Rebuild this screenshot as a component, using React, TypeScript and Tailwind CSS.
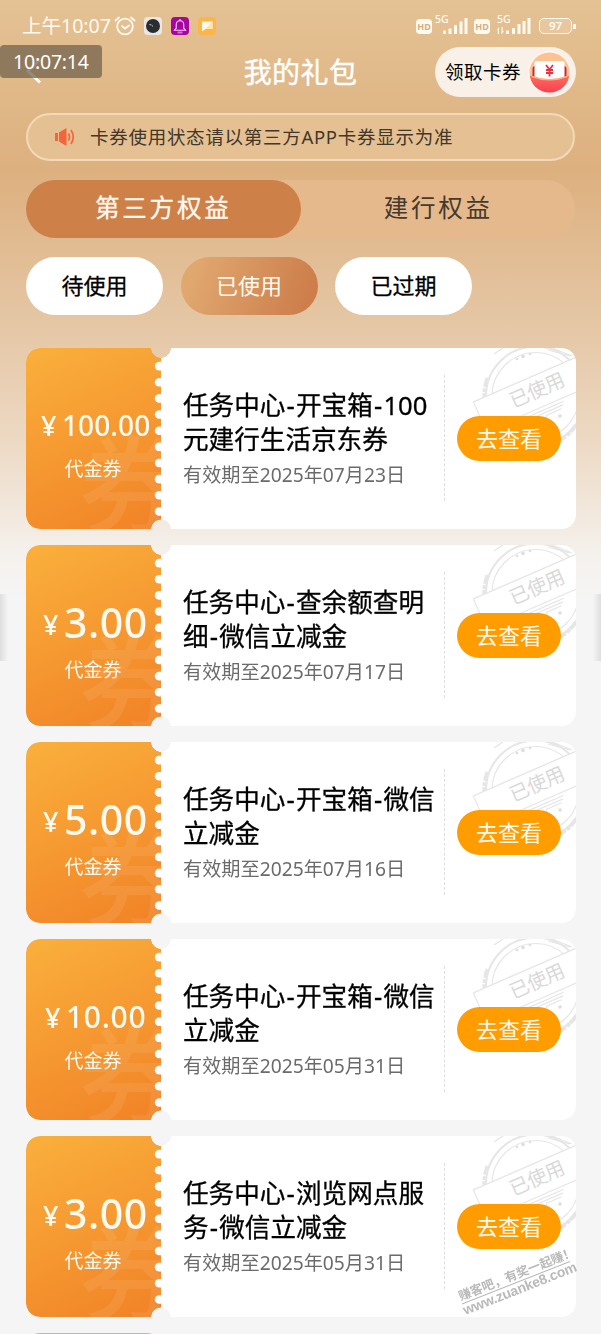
import React from 'react';

type Coupon = {
  id: number;
  amount: string;
  lines: string[];
  expires: string;
};

const COUPONS: Coupon[] = [
  { id: 1, amount: '100.00', lines: ['任务中心-开宝箱-100', '元建行生活京东券'], expires: '2025年07月23日' },
  { id: 2, amount: '3.00', lines: ['任务中心-查余额查明', '细-微信立减金'], expires: '2025年07月17日' },
  { id: 3, amount: '5.00', lines: ['任务中心-开宝箱-微信', '立减金'], expires: '2025年07月16日' },
  { id: 4, amount: '10.00', lines: ['任务中心-开宝箱-微信', '立减金'], expires: '2025年05月31日' },
  { id: 5, amount: '3.00', lines: ['任务中心-浏览网点服', '务-微信立减金'], expires: '2025年05月31日' },
];

// yen sign and number styles depend on how long the amount is
const AMOUNT_STYLES: Record<number, { row: string; yen: string; value: string; label: string }> = {
  4: {
    row: 'mt-[51px] h-[52px] pl-[17px] gap-[4px]',
    yen: 'text-[27px] pt-[4px]',
    value: 'text-[41px] tracking-[0.6px]',
    label: 'mt-[8px]',
  },
  5: {
    row: 'mt-[52px] h-[52px] pl-[19px] gap-[4px]',
    yen: 'text-[27px] pt-px',
    value: 'text-[30px] tracking-[0.7px]',
    label: 'mt-[4px]',
  },
  6: {
    row: 'mt-[51px] h-[52px] pl-[15px] gap-[4px]',
    yen: 'text-[27px]',
    value: 'text-[28px] tracking-[0.1px]',
    label: 'mt-[4px]',
  },
};

const Signal = ({ arrows = false }: { arrows?: boolean }) => (
  <svg width="34" height="26" viewBox="0 -3 34 26" fill="#fffaf0">
    <text x="0" y="7" fontSize="10.500" fontFamily="Noto Sans" fontWeight="500">
      5G
    </text>
    {!arrows && <rect x="8" y="14.500" width="3" height="3.500" rx="0.600" />}
    {arrows && <path d="M0 14l2-3v7H.8v-4zM4.500 11h1.200v4H7l-2.500 3.500z" />}
    <rect x={arrows ? 9 : 13.500} y={arrows ? 14.500 : 12.500} width="3" height={arrows ? 3.500 : 5.500} rx="0.600" />
    <rect x={arrows ? 15 : 19} y={arrows ? 12 : 9} width="3" height={arrows ? 6 : 9} rx="0.600" />
    <rect x={arrows ? 20.500 : 24.500} y={arrows ? 8 : 5.500} width="3" height={arrows ? 10 : 12.500} rx="0.600" />
    <rect x={arrows ? 25.500 : 29.500} y={arrows ? 5 : 2} width="3" height={arrows ? 13 : 16} rx="0.600" />
    {arrows && <rect x="30.500" y="2" width="3" height="16" rx="0.600" />}
  </svg>
);

const HdBadge = () => (
  <span className="flex h-[15px] w-[16px] items-center justify-center rounded-[4px] bg-[#fffaf0] text-[9px] leading-none font-bold text-[#d3b083]">
    HD
  </span>
);

const StatusBar = () => (
  <div className="flex h-[47px] items-center justify-between pt-[5px] pr-[25px] pl-[22px] text-[#fffaf0]">
    <div className="flex items-center">
      <span className="w-[92px] text-[19.500px] leading-[24px] whitespace-nowrap">上午10:07</span>
      <svg width="22" height="20" viewBox="0 0 22 20" fill="none" stroke="#fffaf0" strokeWidth="1.800" strokeLinecap="round">
        <circle cx="11" cy="10.500" r="7.800" />
        <path d="M1.500 4.500L5 1.500M20.500 4.500L17 1.500M8 10l3 2.500 4-3" />
      </svg>
      <svg className="ml-[8px]" width="18" height="18" viewBox="0 0 18 18">
        <rect width="18" height="18" rx="4" fill="#e9e8e5" />
        <circle cx="9" cy="9" r="7" fill="#2b2e31" />
        <path d="M5.500 7.500l2 .5M8 8.800l1 .4" stroke="#cfcfcf" strokeWidth="1" />
      </svg>
      <svg className="ml-[9px]" width="18" height="18" viewBox="0 0 18 18">
        <rect width="18" height="18" rx="4" fill="#a5069f" />
        <path d="M3.500 13.200h11l-1.700-2V8c0-2.500-1.500-4.200-3.800-4.200S5.200 5.500 5.200 8v3.200z" fill="none" stroke="#f4cdf2" strokeWidth="1.100" />
        <path d="M9 2v2" stroke="#f4cdf2" strokeWidth="1.200" />
        <rect x="6.500" y="14.500" width="5" height="2" fill="#e26be0" />
      </svg>
      <svg className="ml-[9px]" width="18" height="18" viewBox="0 0 18 18">
        <rect width="18" height="18" rx="4" fill="#fdb548" />
        <path d="M4 4.500h10.500v7.500H7.500L4 14.500z" fill="#fff8e8" />
        <path d="M14.500 4.500v7.500H7.500z" fill="#ffe3ab" />
      </svg>
    </div>
    <div className="flex items-center">
      <HdBadge />
      <span className="ml-[3px]">
        <Signal />
      </span>
      <span className="ml-[5px]">
        <HdBadge />
      </span>
      <span className="ml-[7px]">
        <Signal arrows />
      </span>
      <div className="ml-[8px] flex h-[16px] w-[33px] items-center justify-center rounded-[5px] border-[1.5px] border-[#fffaf0] bg-[#fffaf0]/15 text-[11.500px] leading-none font-semibold">
        97
      </div>
      <span className="ml-px h-[5px] w-[3px] bg-[#fffaf0]" />
    </div>
  </div>
);

const TitleBar = () => (
  <div className="grid h-[50px] grid-cols-3 items-center pr-[25px]">
    <div className="relative h-full">
      <svg className="ml-[25px]" width="18" height="42" viewBox="0 0 18 42" fill="none" stroke="#fff" strokeWidth="3">
        <path d="M15 12.500L3 24 15 35.500" />
      </svg>
      <div className="absolute -top-[2px] left-0 flex h-[33px] w-[102px] items-center rounded-[4px] bg-[#73634e]/75 pl-[13px] text-[19.500px] tracking-[-0.2px] text-white">
        10:07:14
      </div>
    </div>
    <h1 className="-mr-[25px] text-center text-[28px] leading-[40px] tracking-[0.4px] text-white [-webkit-text-stroke:0.4px]">
      我的礼包
    </h1>
    <div className="ml-auto flex h-[50px] w-[141px] items-center rounded-full bg-[#f9f1e7] pl-[10px] text-[18.500px] tracking-[0.5px] whitespace-nowrap text-black">
      领取卡券
      <svg className="ml-[7px] shrink-0" width="43" height="43" viewBox="0 0 43 43">
        <defs>
          <linearGradient id="bag" x1="0" y1="0" x2="0" y2="1">
            <stop offset="0" stopColor="#ff6a5e" />
            <stop offset="1" stopColor="#f53b52" />
          </linearGradient>
          <clipPath id="disc">
            <circle cx="21.500" cy="21.500" r="20" />
          </clipPath>
        </defs>
        <circle cx="21.500" cy="21.500" r="21.500" fill="#fff6ee" />
        <g clipPath="url(#disc)">
          <rect width="43" height="43" fill="#fcc294" />
          <rect x="4.500" y="15" width="34" height="14" rx="3" fill="#c92838" />
          <path d="M6.500 11.500q0-1.500 1.500-1.500h27q1.500 0 1.500 1.500V29h-30z" fill="#fff" />
          <path d="M2 25q19.500 7 39 0v18H2z" fill="url(#bag)" />
          <path d="M4 25.500q17.500 6.500 35 0" fill="none" stroke="#ffb07c" strokeWidth="1.500" />
        </g>
        <path d="M18 14l3.500 4.500L25 14M21.500 18.500v7M18 19h7M18 22h7" fill="none" stroke="#e8323f" strokeWidth="1.800" />
      </svg>
    </div>
  </div>
);

const Notice = () => (
  <div className="mx-[26px] mt-[16px] flex h-[48px] items-center rounded-full border-2 border-[#f3d9b7] bg-[#e5c093] pl-[26px] text-[18.500px] text-[#42372a]">
    <svg className="mr-[14px]" width="22" height="20" viewBox="0 0 22 20">
      <path d="M1 6h3v8H1zM5 5.500L12.500 1v18L5 14.500z" fill="#f3653a" />
      <path d="M14.500 6.500q2 3.500 0 7M17 3q4.500 7 0 14" fill="none" stroke="#f3653a" strokeWidth="1.700" />
    </svg>
    <span className="whitespace-nowrap tracking-[0.72px]">卡券使用状态请以第三方APP卡券显示为准</span>
  </div>
);

const Tabs = () => (
  <div className="mx-[26px] mt-[19px] flex h-[58px] rounded-full bg-[#e5b98c] text-[24.500px]">
    <div className="flex w-[275px] items-center justify-center rounded-full bg-[#ce8049] pb-px tracking-[2.800px] text-[#fffaf0] [-webkit-text-stroke:0.3px]">
      第三方权益
    </div>
    <div className="flex w-[275px] items-center justify-center pb-px pl-px tracking-[2.800px] text-[#453a2d]">建行权益</div>
  </div>
);

const Filters = () => (
  <div className="mt-[19px] ml-[26px] flex gap-[17.5px] pb-px text-[22px] leading-[56px] text-black">
    <button className="h-[58px] w-[137px] rounded-full bg-white pb-[2px] [-webkit-text-stroke:0.3px]">待使用</button>
    <button className="h-[58px] w-[137px] rounded-full bg-linear-[110deg] from-[#e0a86f] from-10% to-[#cd7e4b] to-90% pb-[2px] text-[#fffaf0]">
      已使用
    </button>
    <button className="h-[58px] w-[137px] rounded-full bg-white pb-[2px] [-webkit-text-stroke:0.3px]">已过期</button>
  </div>
);

const UsedStamp = () => (
  <svg className="absolute top-0 right-0" width="120" height="110" viewBox="0 0 120 110" fill="none" stroke="#e6e6e6">
    <circle cx="79.500" cy="48" r="49.500" strokeWidth="2" />
    <path d="M31.500 30q-5 14-2 27M102 93q15-8 23-24" strokeWidth="4" strokeDasharray="9 1.500 4 1" />
    <circle cx="79.500" cy="48" r="43.500" strokeWidth="1.200" />
    <path d="M38 6l9-6M92 2l22 6M96 0l20 8" strokeWidth="1.200" />
    <g transform="rotate(-23.500 81 42)">
      <rect x="18" y="27.500" width="130" height="32" fill="#fff" strokeWidth="1.200" />
      <path d="M57 63h44M59 66h40M62 69h9l4 5 5-5h16" strokeWidth="1.200" />
      <text x="81" y="49" textAnchor="middle" fontSize="19.500" stroke="none" fill="#d9d9d9" letterSpacing="-0.300">
        已使用
      </text>
    </g>
    <g fill="#dedede" stroke="none">
      <circle cx="61" cy="11" r="1.300" />
      <circle cx="67" cy="8.500" r="1.800" />
      <circle cx="74" cy="6" r="1.300" />
      <circle cx="104" cy="68" r="1.800" />
      <circle cx="96" cy="75" r="1.500" />
    </g>
  </svg>
);

const Watermark = () => (
  <svg className="absolute right-0 bottom-0" width="151" height="98" viewBox="0 0 151 98" fill="#b9b9b9">
    <g transform="translate(12 68) rotate(-21.500)">
      <text x="0" y="-3.500" fontSize="12.500" fontWeight="700" textLength="124">
        赚客吧，有奖一起赚！
      </text>
      <path d="M0 0h116" stroke="#b9b9b9" strokeWidth="0.900" />
      <text x="-1" y="11.500" fontSize="14" fontWeight="700" fontFamily="Liberation Sans" textLength="121">
        www.zuanke8.com
      </text>
    </g>
  </svg>
);

const Perforation = () => (
  <svg className="absolute top-0 right-0" width="7" height="181" viewBox="0 0 7 181" fill="#fff">
    {Array.from({ length: 10 }, (_, i) => (
      <rect key={i} x="0.800" y={13.800 + i * 16.150} width="12" height="8.600" rx="4.300" />
    ))}
  </svg>
);

const TitleLine = ({ text }: { text: string }) => (
  <span className="block">
    {text.split('-').map((part, i) => (
      <React.Fragment key={i}>
        {i > 0 && <span className="pr-[1.2px] pl-[1.2px]">-</span>}
        {part}
      </React.Fragment>
    ))}
  </span>
);

const CouponCard = ({ coupon }: { coupon: Coupon }) => {
  const style = AMOUNT_STYLES[coupon.amount.length];
  return (
    <div className="relative flex h-[181px] overflow-hidden rounded-[14px] bg-white [mask:radial-gradient(circle_10px_at_135px_0,transparent_96%,#000)_top/100%_51%_no-repeat,radial-gradient(circle_10px_at_135px_100%,transparent_96%,#000)_bottom/100%_51%_no-repeat]">
      <div className="relative w-[135px] shrink-0 overflow-hidden bg-linear-[155deg] from-[#fab03c] to-[#f18226] text-[#fffaf0]">
        <span className="absolute top-[77px] left-[53px] text-[106px] leading-[118px] font-medium text-white/8">券</span>
        <Perforation />
        <div className={`relative flex items-center font-medium whitespace-nowrap ${style.row}`}>
          <span className={`w-[17px] leading-none ${style.yen}`}>¥</span>
          <span className={`leading-none ${style.value}`}>{coupon.amount}</span>
        </div>
        <div className={`relative pr-px text-center text-[19px] leading-[28px] ${style.label}`}>代金券</div>
      </div>
      <div className="w-[282.5px] shrink-0 pt-[40.5px] pl-[22px] whitespace-nowrap">
        <h2 className="text-[25.600px] leading-[34px] text-black [-webkit-text-stroke:0.3px]">
          {coupon.lines.map((line) => (
            <TitleLine key={line} text={line} />
          ))}
        </h2>
        <p className="mt-[4.5px] text-[19.200px] leading-[28px] text-[#6b6b6b]">有效期至{coupon.expires}</p>
      </div>
      <div className="mt-[27px] h-[126px] border-l border-dashed border-[#dedede]" />
      <UsedStamp />
      <button className="relative mt-[68px] ml-[12.5px] h-[45px] w-[104px] rounded-full bg-[#ff9c00] pb-px text-[22px] leading-[44px] text-[#fffaf0]">
        去查看
      </button>
    </div>
  );
};

const App = () => {
  return (
    <div className="relative h-[1334px] w-[601px] overflow-hidden bg-[#f5f5f5] bg-[linear-gradient(180deg,#e4c294_0px,#ddb07f_170px,#e6c9a9_340px,#edd9c3_440px,#f5f2ee_560px,#f5f5f5_600px)] font-['Noto_Sans','Noto_Sans_CJK_SC',sans-serif]">
      <StatusBar />
      <TitleBar />
      <Notice />
      <Tabs />
      <Filters />
      <div className="mt-[32px] mr-[25px] ml-[26px] flex flex-col gap-[16px]">
        {COUPONS.map((coupon) => (
          <CouponCard key={coupon.id} coupon={coupon} />
        ))}
        <div className="h-[20px] w-[135px] rounded-t-[14px] bg-[#fab03c]" />
      </div>
      {/* edge gesture handles */}
      <div className="absolute top-[594px] left-0 h-[67px] w-[8px] bg-linear-to-r from-[#dedede] to-[#f5f5f5]" />
      <div className="absolute top-[594px] right-0 h-[67px] w-[8px] bg-linear-to-l from-[#dedede] to-[#f5f5f5]" />
      <Watermark />
    </div>
  );
};

export default App;
